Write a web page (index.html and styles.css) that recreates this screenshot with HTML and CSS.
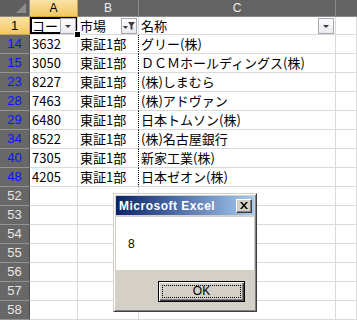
FILE: index.html
```html
<!DOCTYPE html>
<html>
<head>
<meta charset="utf-8">
<link rel="stylesheet" href="styles.css">
</head>
<body>
<div class="sheet">
  <div class="corner"></div>
  <div class="ch sel">A</div>
  <div class="ch">B</div>
  <div class="ch">C</div>
  <div class="ch last"></div>

  <div class="rh sel">1</div>
  <div class="c hdr active"><span class="t">コード</span><span class="fb"><svg width="14" height="14" viewBox="0 0 14 14"><polygon points="4,6 10,6 7,9" fill="#3c3c3c"/></svg></span><span class="handle"></span></div>
  <div class="c hdr"><span class="t">市場</span><span class="fb"><svg width="14" height="14" viewBox="0 0 14 14"><polygon points="1,7 6,7 3.5,10" fill="#3c3c3c"/><polygon points="6,3 13,3 10.5,6.5 10.5,11 8.5,10 8.5,6.5" fill="#3c3c3c"/></svg></span></div>
  <div class="c hdr"><span class="t">名称</span><span class="fb"><svg width="14" height="14" viewBox="0 0 14 14"><polygon points="4,6 10,6 7,9" fill="#3c3c3c"/></svg></span></div>
  <div class="c"></div>

  <div class="rh flt">14</div><div class="c">3632</div><div class="c pb">東証1部</div><div class="c">グリー(株)</div><div class="c"></div>
  <div class="rh flt">15</div><div class="c">3050</div><div class="c pb">東証1部</div><div class="c">ＤＣＭホールディングス(株)</div><div class="c"></div>
  <div class="rh flt">23</div><div class="c">8227</div><div class="c pb">東証1部</div><div class="c">(株)しまむら</div><div class="c"></div>
  <div class="rh flt">28</div><div class="c">7463</div><div class="c pb">東証1部</div><div class="c">(株)アドヴァン</div><div class="c"></div>
  <div class="rh flt">29</div><div class="c">6480</div><div class="c pb">東証1部</div><div class="c">日本トムソン(株)</div><div class="c"></div>
  <div class="rh flt">34</div><div class="c">8522</div><div class="c pb">東証1部</div><div class="c">(株)名古屋銀行</div><div class="c"></div>
  <div class="rh flt">40</div><div class="c">7305</div><div class="c pb">東証1部</div><div class="c">新家工業(株)</div><div class="c"></div>
  <div class="rh flt">48</div><div class="c">4205</div><div class="c pb">東証1部</div><div class="c">日本ゼオン(株)</div><div class="c"></div>
  <div class="rh">52</div><div class="c"></div><div class="c"></div><div class="c"></div><div class="c"></div>
  <div class="rh">53</div><div class="c"></div><div class="c"></div><div class="c"></div><div class="c"></div>
  <div class="rh">54</div><div class="c"></div><div class="c"></div><div class="c"></div><div class="c"></div>
  <div class="rh">55</div><div class="c"></div><div class="c"></div><div class="c"></div><div class="c"></div>
  <div class="rh">56</div><div class="c"></div><div class="c"></div><div class="c"></div><div class="c"></div>
  <div class="rh">57</div><div class="c"></div><div class="c"></div><div class="c"></div><div class="c"></div>
  <div class="rh">58</div><div class="c"></div><div class="c"></div><div class="c"></div><div class="c"></div>
</div>

<div class="dialog">
  <div class="titlebar">
    <span class="title">Microsoft Excel</span>
    <span class="close"><svg width="8" height="7" viewBox="0 0 8 7"><path d="M0 0h2l2 2.5L6 0h2L5 3.5 8 7H6L4 4.5 2 7H0l3-3.5z" fill="#000"/></svg></span>
  </div>
  <div class="msg">8</div>
  <div class="footer">
    <div class="okbtn"><span class="focus">OK</span></div>
  </div>
</div>
</body>
</html>
```
FILE: styles.css
```css
html, body {
  margin: 0;
  padding: 0;
}
body {
  width: 357px;
  height: 321px;
  overflow: hidden;
  position: relative;
  background: #ffffff;
  font-family: "Noto Sans CJK JP", "Liberation Sans", sans-serif;
}
.sheet {
  display: grid;
  grid-template-columns: 30px 48px 61px 197px 21px;
  grid-template-rows: 17px 18px repeat(15, 19px);
}
.sheet > div {
  box-sizing: border-box;
}
.corner {
  background: #5e5e5e;
  border-right: 1px solid #8a8a8a;
  border-bottom: 1px solid #8a8a8a;
  position: relative;
}
.corner::after {
  content: "";
  position: absolute;
  right: 3px;
  bottom: 3px;
  width: 10px;
  height: 10px;
  background: #8c8c8c;
  clip-path: polygon(100% 0, 100% 100%, 0 100%);
}
.ch {
  background: #636363;
  border-right: 1px solid #8a8a8a;
  border-bottom: 1px solid #8a8a8a;
  color: #f2f2f2;
  font-family: "Liberation Sans", sans-serif;
  font-size: 12px;
  line-height: 16px;
  text-align: center;
}
.ch.last {
  border-right: none;
}
.ch.sel {
  background: linear-gradient(#fae2a6, #f3c862);
  color: #000;
  border-bottom: 1px solid #e0a530;
  border-right: 1px solid #c7a35a;
}
.rh {
  background: #676767;
  border-right: 1px solid #4a4a4a;
  border-bottom: 1px solid #939393;
  color: #e6e6e6;
  font-family: "Liberation Sans", sans-serif;
  font-size: 13px;
  line-height: 18px;
  text-align: center;
}
.rh.flt {
  color: #0a14ff;
}
.rh.sel {
  background: linear-gradient(#fae2a6, #f3c862);
  color: #000;
  border-right: 1px solid #e0a530;
  border-bottom: 1px solid #c7a35a;
  line-height: 17px;
}
.c {
  border-right: 1px solid #dadada;
  border-bottom: 1px solid #dadada;
  font-size: 13px;
  line-height: 18px;
  color: #000;
  padding-left: 2px;
  white-space: nowrap;
  overflow: hidden;
  display: flex;
  align-items: center;
}
.c.pb {
  border-right: 1px dotted #000;
}
.c.hdr {
  position: relative;
}
.c.hdr .t {
  white-space: nowrap;
}
.c.active {
  overflow: visible;
  z-index: 2;
  box-shadow: inset 0 0 0 2px #000;
}
.handle {
  position: absolute;
  right: -3px;
  bottom: -3px;
  width: 5px;
  height: 5px;
  background: #000;
  outline: 1px solid #fff;
}
.fb {
  position: absolute;
  right: 1px;
  top: 1px;
  width: 16px;
  height: 16px;
  box-sizing: border-box;
  border: 1px solid #a3a8b0;
  background: linear-gradient(#fdfdfe, #e9ebef);
  display: flex;
  align-items: center;
  justify-content: center;
}
.fb svg {
  display: block;
}

/* dialog */
.dialog {
  position: absolute;
  left: 113px;
  top: 193px;
  width: 144px;
  height: 119px;
  box-sizing: border-box;
  background: #d4d0c8;
  border: 1px solid;
  border-color: #d4d0c8 #404040 #404040 #d4d0c8;
  box-shadow: inset 1px 1px 0 #ffffff, inset -1px -1px 0 #808080;
  padding: 2px;
  display: flex;
  flex-direction: column;
}
.titlebar {
  height: 19px;
  flex-shrink: 0;
  background: linear-gradient(to right, #0a246a, #a6caf0);
  display: flex;
  align-items: center;
  justify-content: space-between;
  padding: 0 2px 0 3px;
}
.title {
  color: #ffffff;
  font-family: "Liberation Sans", sans-serif;
  font-weight: bold;
  font-size: 12px;
  letter-spacing: 0.5px;
}
.close {
  width: 16px;
  height: 14px;
  box-sizing: border-box;
  background: #d4d0c8;
  border: 1px solid;
  border-color: #ffffff #404040 #404040 #ffffff;
  box-shadow: inset -1px -1px 0 #808080;
  display: flex;
  align-items: center;
  justify-content: center;
}
.close svg {
  display: block;
}
.msg {
  margin-top: 2px;
  height: 53px;
  flex-shrink: 0;
  background: #ffffff;
  display: flex;
  align-items: center;
  padding-left: 12px;
  font-family: "Liberation Sans", sans-serif;
  font-size: 12px;
  color: #000;
}
.footer {
  flex: 1;
  display: flex;
  justify-content: flex-end;
  align-items: flex-start;
  padding-top: 11px;
  padding-right: 9px;
}
.okbtn {
  width: 87px;
  height: 21px;
  box-sizing: border-box;
  border: 1px solid #000;
  background: #d4d0c8;
  box-shadow: inset 1px 1px 0 #ffffff, inset -1px -1px 0 #404040, inset -2px -2px 0 #808080;
  padding: 3px;
  display: flex;
}
.focus {
  flex: 1;
  border: 1px dotted #000;
  font-family: "Liberation Sans", sans-serif;
  font-size: 12px;
  line-height: 11px;
  text-align: center;
  color: #000;
}
```
